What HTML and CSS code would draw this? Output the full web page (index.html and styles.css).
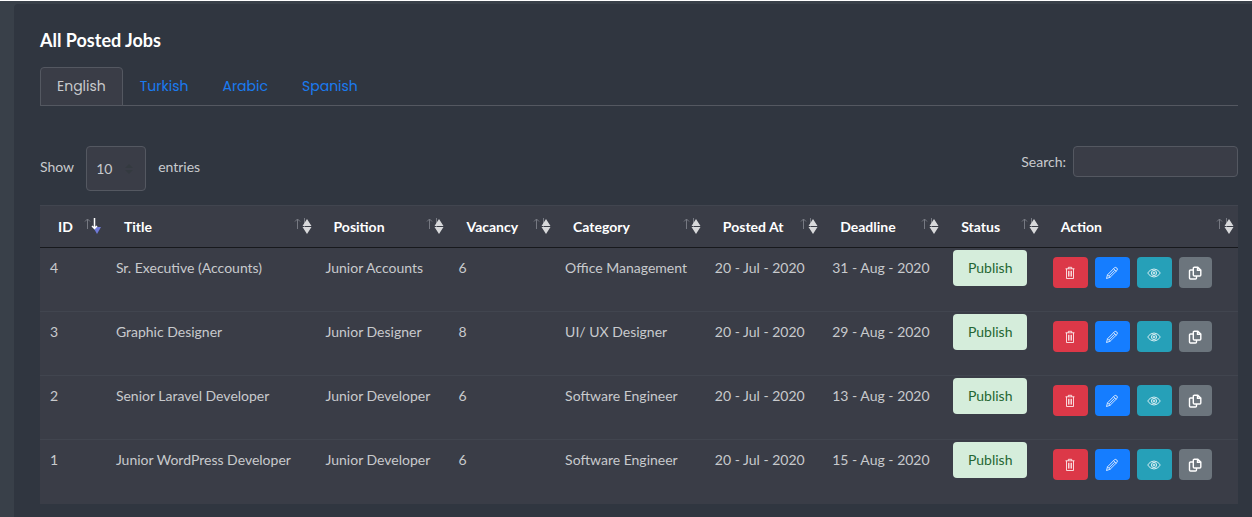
FILE: index.html
```html
<!DOCTYPE html>
<html lang="en">
<head>
  <meta charset="UTF-8">
  <meta name="viewport" content="width=device-width, initial-scale=1.0">
  <title>All Posted Jobs</title>
  <link rel="stylesheet" href="styles.css">
</head>
<body>

  <!-- Icons used in the table -->
  <svg class="sprite" aria-hidden="true">
    <symbol id="sort" viewBox="0 0 18 20">
      <path class="up-arrow" d="M3.500 14V4M1 6.500L3.500 4 6 6.500"/>
      <path class="down-arrow" d="M10.500 3v10"/>
      <path class="diamond" d="M8.500 11L13 4l4.500 7zM8.500 12h9L13 19z"/>
    </symbol>
    <symbol id="sort-desc" viewBox="0 0 18 20">
      <path class="up-arrow" d="M3.500 14V4M1 6.500L3.500 4 6 6.500"/>
      <path class="active-triangle" d="M9 12h8l-4 7z"/>
      <path class="active-arrow" d="M10.500 3v10M8 11l2.500 2.500L13 11"/>
    </symbol>
    <symbol id="trash" viewBox="0 0 14 14">
      <path d="M2.500 2.800h9M5.300 2.800V1.300h3.400v1.500M3.500 2.800v9.700h7V2.800M5.500 4.800v5.800M7 4.800v5.800M8.500 4.800v5.800"/>
    </symbol>
    <symbol id="pencil" viewBox="0 0 14 14">
      <path d="M1.500 12.500l1-3.700 7-7.100q1.300-.8 2.300.3t.3 2.300L5 11.300zM2.500 8.800L5 11.300M8.600 2.700l2.600 2.600M4 9.900l5.600-5.600"/>
    </symbol>
    <symbol id="eye" viewBox="0 0 14 14">
      <path d="M.7 7Q3 3 7 3T13.300 7Q11 11 7 11T.7 7z"/>
      <circle cx="7" cy="7" r="2.600"/>
      <circle cx="7" cy="7" r=".9"/>
    </symbol>
    <symbol id="copy" viewBox="0 0 14 14">
      <path d="M6.300 1.200h3.500L12.800 4v5q0 1-1 1H6.300q-1 0-1-1V2.200q0-1 1-1zM9.500 1.200V4.300h3.300M5.300 4H2.500q-1 0-1 1v7q0 1 1 1h5q1 0 1-1v-2"/>
    </symbol>
  </svg>

  <div class="card">
    <h1>All Posted Jobs</h1>

    <nav class="tabs">
      <a class="tab active" href="#english">English</a>
      <a class="tab" href="#turkish">Turkish</a>
      <a class="tab" href="#arabic">Arabic</a>
      <a class="tab" href="#spanish">Spanish</a>
    </nav>

    <div class="toolbar">
      <label class="length">
        Show
        <select>
          <option>10</option>
          <option>25</option>
          <option>50</option>
          <option>100</option>
        </select>
        entries
      </label>
      <label class="search">
        Search:
        <input type="search">
      </label>
    </div>

    <table>
      <colgroup>
        <col class="col-id">
        <col class="col-title">
        <col class="col-position">
        <col class="col-vacancy">
        <col class="col-category">
        <col class="col-posted">
        <col class="col-deadline">
        <col class="col-status">
        <col class="col-action">
      </colgroup>
      <thead>
        <tr>
          <th><div class="head">ID <svg><use href="#sort-desc"/></svg></div></th>
          <th><div class="head">Title <svg><use href="#sort"/></svg></div></th>
          <th><div class="head">Position <svg><use href="#sort"/></svg></div></th>
          <th><div class="head">Vacancy <svg><use href="#sort"/></svg></div></th>
          <th><div class="head">Category <svg><use href="#sort"/></svg></div></th>
          <th><div class="head">Posted At <svg><use href="#sort"/></svg></div></th>
          <th><div class="head">Deadline <svg><use href="#sort"/></svg></div></th>
          <th><div class="head">Status <svg><use href="#sort"/></svg></div></th>
          <th><div class="head">Action <svg><use href="#sort"/></svg></div></th>
        </tr>
      </thead>
      <tbody>
        <tr>
          <td>4</td>
          <td>Sr. Executive (Accounts)</td>
          <td>Junior Accounts</td>
          <td>6</td>
          <td>Office Management</td>
          <td>20 - Jul - 2020</td>
          <td>31 - Aug - 2020</td>
          <td><span class="badge">Publish</span></td>
          <td>
            <div class="actions">
              <button class="btn red" aria-label="Delete"><svg><use href="#trash"/></svg></button>
              <button class="btn blue" aria-label="Edit"><svg><use href="#pencil"/></svg></button>
              <button class="btn teal" aria-label="View"><svg><use href="#eye"/></svg></button>
              <button class="btn gray" aria-label="Copy"><svg><use href="#copy"/></svg></button>
            </div>
          </td>
        </tr>
        <tr>
          <td>3</td>
          <td>Graphic Designer</td>
          <td>Junior Designer</td>
          <td>8</td>
          <td>UI/ UX Designer</td>
          <td>20 - Jul - 2020</td>
          <td>29 - Aug - 2020</td>
          <td><span class="badge">Publish</span></td>
          <td>
            <div class="actions">
              <button class="btn red" aria-label="Delete"><svg><use href="#trash"/></svg></button>
              <button class="btn blue" aria-label="Edit"><svg><use href="#pencil"/></svg></button>
              <button class="btn teal" aria-label="View"><svg><use href="#eye"/></svg></button>
              <button class="btn gray" aria-label="Copy"><svg><use href="#copy"/></svg></button>
            </div>
          </td>
        </tr>
        <tr>
          <td>2</td>
          <td>Senior Laravel Developer</td>
          <td>Junior Developer</td>
          <td>6</td>
          <td>Software Engineer</td>
          <td>20 - Jul - 2020</td>
          <td>13 - Aug - 2020</td>
          <td><span class="badge">Publish</span></td>
          <td>
            <div class="actions">
              <button class="btn red" aria-label="Delete"><svg><use href="#trash"/></svg></button>
              <button class="btn blue" aria-label="Edit"><svg><use href="#pencil"/></svg></button>
              <button class="btn teal" aria-label="View"><svg><use href="#eye"/></svg></button>
              <button class="btn gray" aria-label="Copy"><svg><use href="#copy"/></svg></button>
            </div>
          </td>
        </tr>
        <tr>
          <td>1</td>
          <td>Junior WordPress Developer</td>
          <td>Junior Developer</td>
          <td>6</td>
          <td>Software Engineer</td>
          <td>20 - Jul - 2020</td>
          <td>15 - Aug - 2020</td>
          <td><span class="badge">Publish</span></td>
          <td>
            <div class="actions">
              <button class="btn red" aria-label="Delete"><svg><use href="#trash"/></svg></button>
              <button class="btn blue" aria-label="Edit"><svg><use href="#pencil"/></svg></button>
              <button class="btn teal" aria-label="View"><svg><use href="#eye"/></svg></button>
              <button class="btn gray" aria-label="Copy"><svg><use href="#copy"/></svg></button>
            </div>
          </td>
        </tr>
      </tbody>
    </table>
  </div>

</body>
</html>
```
FILE: styles.css
```css
* {
  box-sizing: border-box;
}

body {
  margin: 0;
  padding: 3px 0 0 14px;
  border-top: 1px solid #ffffff;
  background-color: #394049;
  color: #c8cacd;
  font-family: Lato, sans-serif;
  font-size: 14px;
}

.sprite {
  display: none;
}

.card {
  padding: 24px 14px 14px 26px;
  background-color: #303640;
  border-top-left-radius: 4px;
}

h1 {
  margin: 0 0 15px;
  color: #ffffff;
  font-size: 18px;
  line-height: 24px;
}

/* Language tabs */
.tabs {
  display: flex;
  margin-bottom: 40px;
  border-bottom: 1px solid #545861;
}

.tab {
  padding: 8px 16px 7px;
  border: 1px solid transparent;
  color: #1a7bf0;
  font-family: Poppins, Inter, sans-serif;
  font-size: 14px;
  line-height: 21px;
  text-decoration: none;
}

.tab.active {
  margin-bottom: -1px;
  border-color: #545861;
  border-radius: 4px 4px 0 0;
  background-color: #3a3d47;
  color: #c8cacd;
}

/* Length and search controls */
.toolbar {
  display: flex;
  justify-content: space-between;
  align-items: flex-start;
  margin-bottom: 14px;
}

.length,
.search {
  display: flex;
}

.length {
  gap: 12px;
  line-height: 42px;
}

.search {
  align-items: center;
  gap: 7px;
}

.length select,
.search input {
  border: 1px solid #545861;
  border-radius: 4px;
  background-color: #3a3d47;
  color: #c8cacd;
  font-family: inherit;
}

.length select {
  width: 60px;
  height: 45px;
  padding: 0 9px;
  background-image: url("data:image/svg+xml,%3Csvg xmlns='http://www.w3.org/2000/svg' viewBox='0 0 8 10'%3E%3Cpath fill='%23343a40' d='M4 0L0 4h8zM4 10L0 6h8z'/%3E%3C/svg%3E");
  background-position: right 12px center;
  background-repeat: no-repeat;
  background-size: 8px 10px;
  font-size: 14px;
  appearance: none;
}

.search input {
  width: 165px;
  height: 31px;
}

/* Jobs table */
table {
  width: 100%;
  table-layout: fixed;
  border-collapse: separate;
  border-spacing: 0;
  background-color: #3a3d47;
}

.col-id { width: 5.5%; }
.col-title { width: 17.5%; }
.col-position { width: 11.1%; }
.col-vacancy { width: 8.9%; }
.col-category { width: 12.5%; }
.col-posted { width: 9.8%; }
.col-deadline { width: 10.1%; }
.col-status { width: 8.3%; }

th {
  height: 43px;
  padding: 0 4px 0 18px;
  border-top: 1px solid #41454f;
  border-bottom: 1px solid #17191d;
  color: #ffffff;
  text-align: left;
}

.head {
  display: flex;
  justify-content: space-between;
  align-items: center;
}

.head svg {
  width: 18px;
  height: 20px;
  margin-bottom: 4px;
}

.up-arrow,
.down-arrow {
  fill: none;
  stroke: #767982;
}

.diamond {
  fill: #d8d9db;
}

.active-triangle {
  fill: #6f79d8;
}

.active-arrow {
  fill: none;
  stroke: #ffffff;
  stroke-width: 1.5;
}

td {
  height: 64px;
  padding: 2px 10px;
  border-bottom: 1px solid #41454f;
  line-height: 36px;
  vertical-align: top;
  white-space: nowrap;
}

tbody tr:last-child td {
  border-bottom: none;
}

.badge {
  display: block;
  width: 74px;
  border-radius: 4px;
  background-color: #d5eddb;
  color: #246633;
  text-align: center;
}

.actions {
  display: flex;
  gap: 7px;
  padding-top: 7px;
}

.btn {
  display: flex;
  justify-content: center;
  align-items: center;
  width: 35px;
  height: 31px;
  padding: 0;
  border: none;
  border-radius: 4px;
  cursor: pointer;
}

.btn svg {
  width: 14px;
  height: 14px;
  fill: none;
  stroke: #ffffff;
  stroke-width: 0.8;
}

.red { background-color: #dc3848; }
.blue { background-color: #157dff; }
.teal { background-color: #26a0b8; }
.gray {
  width: 33px;
  background-color: #6c757d;
}

.gray svg {
  stroke-width: 1.4;
}
```
